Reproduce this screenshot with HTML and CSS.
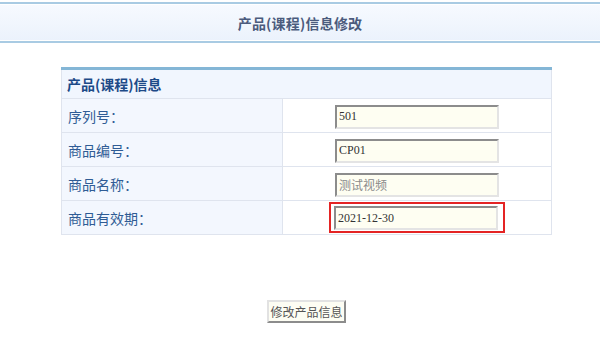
FILE: index.html
```html
<!DOCTYPE html>
<html lang="zh-CN">
<head>
<meta charset="utf-8">
<title>产品(课程)信息修改</title>
<link rel="stylesheet" href="styles.css">
</head>
<body>
<div class="page-head">
  <h1 class="page-title">产品(课程)信息修改</h1>
</div>
<div class="panel">
  <table class="form-table">
    <tr><th colspan="2" class="caption">产品(课程)信息</th></tr>
    <tr><td class="label">序列号<span class="colon">：</span></td><td class="field"><input class="txt" type="text" value="501"></td></tr>
    <tr><td class="label">商品编号<span class="colon">：</span></td><td class="field"><input class="txt" type="text" value="CP01"></td></tr>
    <tr><td class="label">商品名称<span class="colon">：</span></td><td class="field"><input class="txt muted" type="text" value="测试视频"></td></tr>
    <tr><td class="label">商品有效期<span class="colon">：</span></td><td class="field"><span class="mark"><input class="txt" type="text" value="2021-12-30"></span></td></tr>
  </table>
</div>
<div class="actions">
  <button class="btn" type="button">修改产品信息</button>
</div>
</body>
</html>
```

FILE: styles.css
```css
html, body {
  margin: 0;
  padding: 0;
  background: #ffffff;
}
body {
  font-family: "Noto Sans CJK SC", "Noto Sans", sans-serif;
}
.page-head {
  margin-top: 2px;
  height: 37px;
  border-top: 2px solid #a9cbe3;
  border-bottom: 2px solid #a9cbe3;
  box-shadow: inset 0 1px 0 #ffffff, inset 0 -1px 0 #ffffff;
  background: linear-gradient(#f7faff, #ebf2fc);
  display: flex;
  align-items: center;
  justify-content: center;
}
.page-title {
  margin: 0;
  font-size: 14px;
  font-weight: bold;
  color: #4b5b7d;
  letter-spacing: 0.2px;
}
.panel {
  margin: 24px 0 0 61px;
  width: 491px;
}
.form-table {
  width: 491px;
  border-collapse: collapse;
  border-top: 3px solid #84b6d6;
  border-left: 1px solid #dfe4ee;
  border-right: 1px solid #dfe4ee;
  border-bottom: 1px solid #dfe4ee;
}
.caption {
  height: 28px;
  padding: 0 0 0 5px;
  text-align: left;
  font-size: 14px;
  font-weight: bold;
  color: #1d4a88;
  background: #f1f6fe;
  border-bottom: 1px solid #dfe4ee;
}
.form-table td {
  height: 33px;
  padding: 0;
  border-bottom: 1px solid #dfe4ee;
}
.label {
  width: 214px;
  padding-left: 6px !important;
  font-size: 14px;
  color: #2f5c95;
  background: #f3f7fe;
  border-right: 1px solid #dfe4ee;
}
.colon {
  font-family: "Noto Sans CJK TC", sans-serif;
}
.field {
  text-align: center;
  background: #ffffff;
}
.txt {
  box-sizing: border-box;
  width: 164px;
  height: 24px;
  margin: 0;
  padding: 0 2px;
  font-family: "Liberation Serif", "Noto Sans CJK SC", serif;
  font-size: 12px;
  color: #333333;
  background: #fefef2;
  border-style: solid;
  border-width: 2px;
  border-color: #8c8c8c #e4e4e4 #e4e4e4 #8c8c8c;
  vertical-align: middle;
}
.txt.muted {
  color: #8a8a8a;
}
.mark {
  display: inline-block;
  vertical-align: middle;
  padding: 2px 5px 1px 3px;
  border: 2px solid #e42424;
  line-height: 0;
}
.actions {
  margin-top: 65px;
  display: flex;
  justify-content: center;
  padding-left: 13px;
}
.btn {
  box-sizing: border-box;
  width: 79px;
  height: 23px;
  padding: 0;
  font-family: "Noto Sans CJK SC", serif;
  font-size: 12px;
  color: #555555;
  background: #fdfdf3;
  border-style: solid;
  border-width: 2px;
  border-color: #e2e2e2 #8c8c8c #8c8c8c #e2e2e2;
}
```
